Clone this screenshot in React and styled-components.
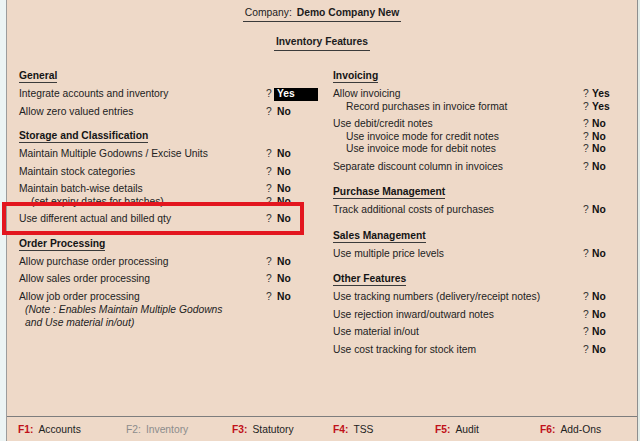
import styled, { createGlobalStyle } from 'styled-components';

const GlobalStyle = createGlobalStyle`
    html, body {
        margin: 0;
        padding: 0;
        background: #ecf4f4;
    }
    body {
        font-family: "Liberation Sans", Arial, sans-serif;
        font-size: 10.3px;
        color: #1c1c1c;
    }
`;

const Frame = styled.div`
    display: flex;
    height: 441px;
    overflow: hidden;
`;

const SideStrip = styled.div`
    width: ${(p) => p.$w}px;
    background: ${(p) => p.$bg};
`;

const Panel = styled.div`
    flex: 1;
    display: flex;
    flex-direction: column;
    background: #eed9c8;
    border-left: 1px solid #9c9c9c;
    border-right: 1px solid #8e8e8e;
`;

const Header = styled.div`
    display: flex;
    flex-direction: column;
    align-items: center;
    padding-top: 7px;
`;

const TitleLine = styled.div`
    line-height: 12px;
    padding: 0 2px 2px;
    border-bottom: 1px solid #3a3a3a;
    margin-top: ${(p) => p.$top || 0}px;
    font-weight: ${(p) => (p.$bold ? 700 : 400)};

    b {
        margin-left: 5px;
    }
`;

const Columns = styled.div`
    display: grid;
    grid-template-columns: 298px 1fr;
    column-gap: 16px;
    padding: 0 10px 0 12px;
    margin-top: 19px;
`;

const Column = styled.div`
    --label-w: ${(p) => p.$label}px;
    --q-w: ${(p) => p.$q}px;
    --section-gap: ${(p) => p.$gap}px;
    display: flex;
    flex-direction: column;
`;

const Section = styled.div`
    margin-top: ${(p) => (p.$first ? '0' : 'var(--section-gap)')};
`;

const Heading = styled.div`
    display: inline-block;
    font-weight: 700;
    line-height: 11px;
    padding-bottom: 1px;
    border-bottom: 1px solid #3a3a3a;
    color: #141414;
`;

const Item = styled.div`
    margin-top: 5px;
    position: relative;

    ${(p) =>
        p.$marked &&
        `
        &::after {
            content: '';
            position: absolute;
            top: -11px;
            bottom: -9px;
            left: -17px;
            right: 13px;
            border: 4px solid #e3161f;
            pointer-events: none;
        }
    `}
`;

const Row = styled.div`
    display: grid;
    grid-template-columns: var(--label-w) var(--q-w) auto;
    line-height: 12.5px;
    white-space: nowrap;
`;

const Label = styled.span`
    padding-left: ${(p) => p.$indent || 0}px;
    color: #222;
`;

const Ask = styled.span`
    color: #333;
`;

const Value = styled.span`
    font-weight: 700;
    color: #111;
    justify-self: start;

    ${(p) =>
        p.$active &&
        `
        background: #000;
        color: #fff;
        margin-left: -3px;
        padding-left: 3px;
        width: 41px;
    `}
`;

const Note = styled.div`
    font-style: italic;
    line-height: 13px;
    padding-left: 6px;
    color: #222;
`;

const Footer = styled.div`
    margin-top: auto;
    border-top: 1px solid #7d7d7d;
    height: 25px;
    box-sizing: border-box;
    padding: 7px 0 0 11px;
    display: grid;
    grid-template-columns: 108px 106px 101px 102px 105px auto;
    line-height: 12px;
`;

const FKey = styled.span`
    color: ${(p) => (p.$off ? '#8c8c8c' : '#222')};

    b {
        color: ${(p) => (p.$off ? '#8c8c8c' : '#c01119')};
        font-weight: ${(p) => (p.$off ? 400 : 700)};
        margin-right: 5px;
    }
`;

const left = [
    {
        title: 'General',
        items: [
            [['Integrate accounts and inventory', 'Yes', 0, true]],
            [['Allow zero valued entries', 'No']],
        ],
    },
    {
        title: 'Storage and Classification',
        items: [
            [['Maintain Multiple Godowns / Excise Units', 'No']],
            [['Maintain stock categories', 'No']],
            [
                ['Maintain batch-wise details', 'No'],
                ['(set expiry dates for batches)', 'No', 12],
            ],
            [['Use different actual and billed qty', 'No']],
        ],
        marked: 3,
    },
    {
        title: 'Order Processing',
        items: [
            [['Allow purchase order processing', 'No']],
            [['Allow sales order processing', 'No']],
            [['Allow job order processing', 'No']],
        ],
        note: ['(Note : Enables Maintain Multiple Godowns', 'and Use material in/out)'],
    },
];

const right = [
    {
        title: 'Invoicing',
        items: [
            [
                ['Allow invoicing', 'Yes'],
                ['Record purchases in invoice format', 'Yes', 13],
            ],
            [
                ['Use debit/credit notes', 'No'],
                ['Use invoice mode for credit notes', 'No', 13],
                ['Use invoice mode for debit notes', 'No', 13],
            ],
            [['Separate discount column in invoices', 'No']],
        ],
    },
    {
        title: 'Purchase Management',
        items: [[['Track additional costs of purchases', 'No']]],
    },
    {
        title: 'Sales Management',
        items: [[['Use multiple price levels', 'No']]],
    },
    {
        title: 'Other Features',
        items: [
            [['Use tracking numbers (delivery/receipt notes)', 'No']],
            [['Use rejection inward/outward notes', 'No']],
            [['Use material in/out', 'No']],
            [['Use cost tracking for stock item', 'No']],
        ],
    },
];

const keys = [
    ['F1:', 'Accounts'],
    ['F2:', 'Inventory', true],
    ['F3:', 'Statutory'],
    ['F4:', 'TSS'],
    ['F5:', 'Audit'],
    ['F6:', 'Add-Ons'],
];

const renderSections = (sections) =>
    sections.map((s, i) => (
        <Section key={s.title} $first={i === 0}>
            <Heading>{s.title}</Heading>
            {s.items.map((lines, j) => (
                <Item key={j} $marked={s.marked === j}>
                    {lines.map(([label, value, indent, active]) => (
                        <Row key={label}>
                            <Label $indent={indent}>{label}</Label>
                            <Ask>?</Ask>
                            <Value $active={active}>{value}</Value>
                        </Row>
                    ))}
                    {s.note && j === s.items.length - 1 &&
                        s.note.map((n) => <Note key={n}>{n}</Note>)}
                </Item>
            ))}
        </Section>
    ));

const App = () => {
    return (
        <>
            <GlobalStyle />
            <Frame>
                <SideStrip $w={6} $bg="#ecf4f4" />
                <Panel>
                    <Header>
                        <TitleLine>
                            Company:<b>Demo Company New</b>
                        </TitleLine>
                        <TitleLine $bold $top={14}>
                            Inventory Features
                        </TitleLine>
                    </Header>
                    <Columns>
                        <Column $label={247} $q={11} $gap={12}>
                            {renderSections(left)}
                        </Column>
                        <Column $label={250} $q={9} $gap={13}>
                            {renderSections(right)}
                        </Column>
                    </Columns>
                    <Footer>
                        {keys.map(([k, label, off]) => (
                            <FKey key={k} $off={off}>
                                <b>{k}</b>
                                {label}
                            </FKey>
                        ))}
                    </Footer>
                </Panel>
                <SideStrip $w={2} $bg="#e2ebe6" />
            </Frame>
        </>
    );
};

export default App;
